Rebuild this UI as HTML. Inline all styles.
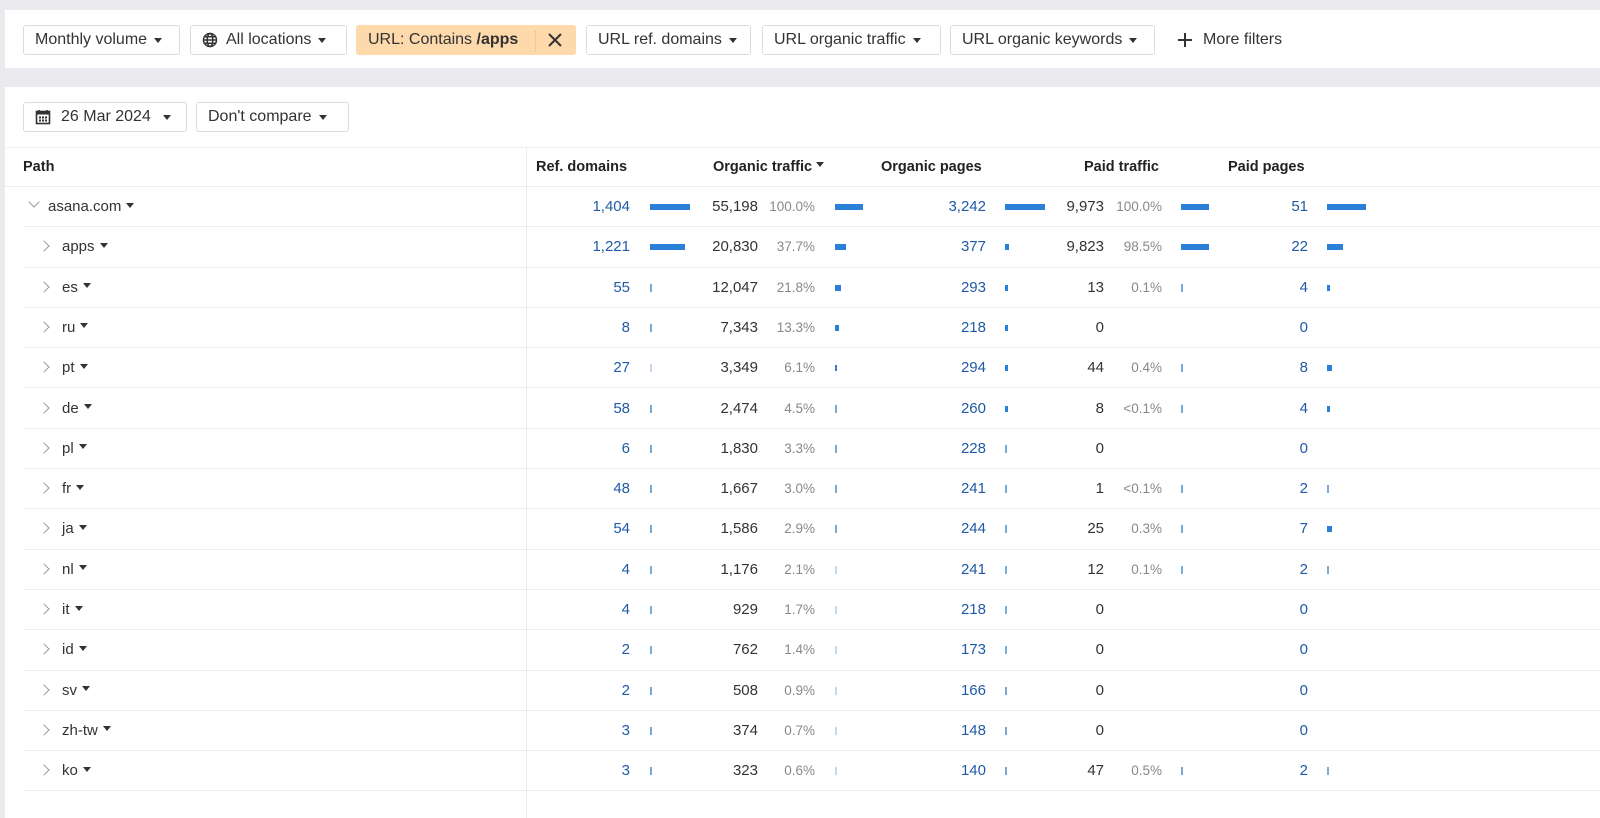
<!DOCTYPE html>
<html><head><meta charset="utf-8"><style>
*{box-sizing:border-box;margin:0;padding:0}
body{width:1600px;height:818px;background:#ebeaee;font-family:"Liberation Sans",Arial,sans-serif;font-size:15px;color:#333;position:relative;overflow:hidden}
.panel{position:absolute;left:5px;right:0;background:#fff}
.btn{position:absolute;height:30px;border:1px solid #dcdce0;border-radius:3px;background:#fff;display:flex;align-items:center;padding:0 11px;font-size:16px;color:#333;white-space:nowrap}
.car{display:inline-block;width:0;height:0;border-left:4px solid transparent;border-right:4px solid transparent;border-top:5px solid #333;margin-left:7px}
.row .car,.hdr .car{position:relative;top:-3px;margin-left:5px;vertical-align:middle}
.hdr{position:absolute;top:147px;left:5px;right:0;height:40px;border-top:1px solid #f0f0f2;border-bottom:1px solid #ececef;font-weight:bold;font-size:14.5px;color:#222}
.hdr span{position:absolute;top:11px}
.vline{position:absolute;left:526px;top:147px;bottom:0;width:1px;background:#ececef}
.row{position:absolute;left:23px;right:0;height:40.3px;border-bottom:1px solid #ececef}
.row span{position:absolute;top:11px;white-space:nowrap}
.row span .car{position:relative;top:-2px}
.r{text-align:right}
.b{color:#1f5aa6}
.g{color:#888;font-size:13.5px;top:12px!important}
.row i{position:absolute;top:17px;height:6px;background:#2a7fd8}
.row i.t{top:16px;height:8px;width:2px;background:#7aa9dc}
.chev{position:absolute;top:15px!important;width:8px;height:8px;border-right:1.3px solid #999;border-top:1.3px solid #999;transform:rotate(45deg)}
</style></head><body>
<div class="panel" style="top:10px;height:58px"></div>
<div class="btn" style="left:23px;top:25px;width:157px">Monthly volume<span class="car"></span></div>
<div class="btn" style="left:190px;top:25px;width:157px"><svg width="16" height="16" viewBox="0 0 16 16" style="margin-right:8px"><g fill="none" stroke="#333" stroke-width="1.5"><circle cx="8" cy="8" r="6.5"/><ellipse cx="8" cy="8" rx="2.8" ry="6.5"/><path d="M1.5 8h13M2.5 4.8h11M2.5 11.2h11"/></g></svg>All locations<span class="car"></span></div>
<div class="btn" style="left:356px;top:25px;width:220px;background:#fdd9ac;border-color:#fdd9ac">URL: Contains&nbsp;<b>/apps</b><span style="position:absolute;left:178px;top:5px;height:20px;border-left:1px dotted #e8b880"></span><svg width="14" height="14" viewBox="0 0 14 14" style="position:absolute;left:191px;top:7px"><path d="M1 1L13 13M13 1L1 13" stroke="#333" stroke-width="2"/></svg></div>
<div class="btn" style="left:586px;top:25px;width:165px">URL ref. domains<span class="car"></span></div>
<div class="btn" style="left:762px;top:25px;width:179px">URL organic traffic<span class="car"></span></div>
<div class="btn" style="left:950px;top:25px;width:205px">URL organic keywords<span class="car"></span></div>
<svg width="16" height="16" viewBox="0 0 16 16" style="position:absolute;left:1177px;top:32px"><path d="M8 1v14M1 8h14" stroke="#333" stroke-width="2"/></svg>
<div style="position:absolute;left:1203px;top:31px;font-size:16px">More filters</div>

<div class="panel" style="top:87px;bottom:0"></div>
<div class="btn" style="left:23px;top:102px;width:164px"><svg width="16" height="16" viewBox="0 0 16 16" style="margin-right:10px"><rect x="1.5" y="2.5" width="13" height="12" fill="none" stroke="#333" stroke-width="1.6"/><rect x="1.5" y="2.5" width="13" height="3" fill="#333"/><path d="M4 1v3M12 1v3" stroke="#333" stroke-width="1.6"/><g fill="#333"><rect x="4" y="7.5" width="2" height="2"/><rect x="7" y="7.5" width="2" height="2"/><rect x="10" y="7.5" width="2" height="2"/><rect x="4" y="10.5" width="2" height="2"/><rect x="7" y="10.5" width="2" height="2"/><rect x="10" y="10.5" width="2" height="2"/></g></svg>26 Mar 2024<span class="car" style="margin-left:12px"></span></div>
<div class="btn" style="left:196px;top:102px;width:153px">Don't compare<span class="car"></span></div>

<div class="hdr">
<span style="left:18px">Path</span>
<span style="left:531px">Ref. domains</span>
<span style="left:708px">Organic traffic<span class="car" style="margin-left:4px"></span></span>
<span style="left:876px">Organic pages</span>
<span style="left:1079px">Paid traffic</span>
<span style="left:1223px">Paid pages</span>
</div>
<div class="vline"></div>

<div class="row" style="top:187px"><span class="chev" style="left:7px;top:11px!important;transform:rotate(135deg)"></span><span style="left:25px">asana.com<span class="car"></span></span>
<span class="r b" style="left:507px;width:100px">1,404</span><i style="left:627px;width:40px"></i>
<span class="r" style="left:655px;width:80px">55,198</span><span class="r g" style="left:737px;width:55px">100.0%</span><i style="left:812px;width:28px"></i>
<span class="r b" style="left:863px;width:100px">3,242</span><i style="left:982px;width:40px"></i>
<span class="r" style="left:1001px;width:80px">9,973</span><span class="r g" style="left:1084px;width:55px">100.0%</span><i style="left:1158px;width:28px"></i>
<span class="r b" style="left:1205px;width:80px">51</span><i style="left:1304px;width:39px"></i></div>

<div class="row" style="top:227.3px"><span class="chev" style="left:17px"></span><span style="left:39px">apps<span class="car"></span></span>
<span class="r b" style="left:507px;width:100px">1,221</span><i style="left:627px;width:35px"></i>
<span class="r" style="left:655px;width:80px">20,830</span><span class="r g" style="left:737px;width:55px">37.7%</span><i style="left:812px;width:11px"></i>
<span class="r b" style="left:863px;width:100px">377</span><i style="left:982px;width:4px"></i>
<span class="r" style="left:1001px;width:80px">9,823</span><span class="r g" style="left:1084px;width:55px">98.5%</span><i style="left:1158px;width:28px"></i>
<span class="r b" style="left:1205px;width:80px">22</span><i style="left:1304px;width:16px"></i></div>

<div class="row" style="top:267.6px"><span class="chev" style="left:17px"></span><span style="left:39px">es<span class="car"></span></span>
<span class="r b" style="left:507px;width:100px">55</span><i class="t" style="left:627px"></i>
<span class="r" style="left:655px;width:80px">12,047</span><span class="r g" style="left:737px;width:55px">21.8%</span><i style="left:812px;width:6px"></i>
<span class="r b" style="left:863px;width:100px">293</span><i style="left:982px;width:3px"></i>
<span class="r" style="left:1001px;width:80px">13</span><span class="r g" style="left:1084px;width:55px">0.1%</span><i class="t" style="left:1158px"></i>
<span class="r b" style="left:1205px;width:80px">4</span><i style="left:1304px;width:3px"></i></div>

<div class="row" style="top:307.9px"><span class="chev" style="left:17px"></span><span style="left:39px">ru<span class="car"></span></span>
<span class="r b" style="left:507px;width:100px">8</span><i class="t" style="left:627px"></i>
<span class="r" style="left:655px;width:80px">7,343</span><span class="r g" style="left:737px;width:55px">13.3%</span><i style="left:812px;width:4px"></i>
<span class="r b" style="left:863px;width:100px">218</span><i style="left:982px;width:3px"></i>
<span class="r" style="left:1001px;width:80px">0</span>
<span class="r b" style="left:1205px;width:80px">0</span></div>

<div class="row" style="top:348.2px"><span class="chev" style="left:17px"></span><span style="left:39px">pt<span class="car"></span></span>
<span class="r b" style="left:507px;width:100px">27</span><i class="t" style="left:627px;background:#c5d8ee"></i>
<span class="r" style="left:655px;width:80px">3,349</span><span class="r g" style="left:737px;width:55px">6.1%</span><i style="left:812px;width:2px"></i>
<span class="r b" style="left:863px;width:100px">294</span><i style="left:982px;width:3px"></i>
<span class="r" style="left:1001px;width:80px">44</span><span class="r g" style="left:1084px;width:55px">0.4%</span><i class="t" style="left:1158px"></i>
<span class="r b" style="left:1205px;width:80px">8</span><i style="left:1304px;width:5px"></i></div>

<div class="row" style="top:388.5px"><span class="chev" style="left:17px"></span><span style="left:39px">de<span class="car"></span></span>
<span class="r b" style="left:507px;width:100px">58</span><i class="t" style="left:627px"></i>
<span class="r" style="left:655px;width:80px">2,474</span><span class="r g" style="left:737px;width:55px">4.5%</span><i class="t" style="left:812px"></i>
<span class="r b" style="left:863px;width:100px">260</span><i style="left:982px;width:3px"></i>
<span class="r" style="left:1001px;width:80px">8</span><span class="r g" style="left:1084px;width:55px">&lt;0.1%</span><i class="t" style="left:1158px"></i>
<span class="r b" style="left:1205px;width:80px">4</span><i style="left:1304px;width:3px"></i></div>

<div class="row" style="top:428.8px"><span class="chev" style="left:17px"></span><span style="left:39px">pl<span class="car"></span></span>
<span class="r b" style="left:507px;width:100px">6</span><i class="t" style="left:627px"></i>
<span class="r" style="left:655px;width:80px">1,830</span><span class="r g" style="left:737px;width:55px">3.3%</span><i class="t" style="left:812px"></i>
<span class="r b" style="left:863px;width:100px">228</span><i class="t" style="left:982px"></i>
<span class="r" style="left:1001px;width:80px">0</span>
<span class="r b" style="left:1205px;width:80px">0</span></div>

<div class="row" style="top:469.1px"><span class="chev" style="left:17px"></span><span style="left:39px">fr<span class="car"></span></span>
<span class="r b" style="left:507px;width:100px">48</span><i class="t" style="left:627px"></i>
<span class="r" style="left:655px;width:80px">1,667</span><span class="r g" style="left:737px;width:55px">3.0%</span><i class="t" style="left:812px"></i>
<span class="r b" style="left:863px;width:100px">241</span><i class="t" style="left:982px"></i>
<span class="r" style="left:1001px;width:80px">1</span><span class="r g" style="left:1084px;width:55px">&lt;0.1%</span><i class="t" style="left:1158px"></i>
<span class="r b" style="left:1205px;width:80px">2</span><i class="t" style="left:1304px"></i></div>

<div class="row" style="top:509.4px"><span class="chev" style="left:17px"></span><span style="left:39px">ja<span class="car"></span></span>
<span class="r b" style="left:507px;width:100px">54</span><i class="t" style="left:627px"></i>
<span class="r" style="left:655px;width:80px">1,586</span><span class="r g" style="left:737px;width:55px">2.9%</span><i class="t" style="left:812px"></i>
<span class="r b" style="left:863px;width:100px">244</span><i class="t" style="left:982px"></i>
<span class="r" style="left:1001px;width:80px">25</span><span class="r g" style="left:1084px;width:55px">0.3%</span><i class="t" style="left:1158px"></i>
<span class="r b" style="left:1205px;width:80px">7</span><i style="left:1304px;width:5px"></i></div>

<div class="row" style="top:549.7px"><span class="chev" style="left:17px"></span><span style="left:39px">nl<span class="car"></span></span>
<span class="r b" style="left:507px;width:100px">4</span><i class="t" style="left:627px"></i>
<span class="r" style="left:655px;width:80px">1,176</span><span class="r g" style="left:737px;width:55px">2.1%</span><i class="t" style="left:812px;background:#c5d8ee"></i>
<span class="r b" style="left:863px;width:100px">241</span><i class="t" style="left:982px"></i>
<span class="r" style="left:1001px;width:80px">12</span><span class="r g" style="left:1084px;width:55px">0.1%</span><i class="t" style="left:1158px"></i>
<span class="r b" style="left:1205px;width:80px">2</span><i class="t" style="left:1304px"></i></div>

<div class="row" style="top:590px"><span class="chev" style="left:17px"></span><span style="left:39px">it<span class="car"></span></span>
<span class="r b" style="left:507px;width:100px">4</span><i class="t" style="left:627px"></i>
<span class="r" style="left:655px;width:80px">929</span><span class="r g" style="left:737px;width:55px">1.7%</span><i class="t" style="left:812px;background:#c5d8ee"></i>
<span class="r b" style="left:863px;width:100px">218</span><i class="t" style="left:982px"></i>
<span class="r" style="left:1001px;width:80px">0</span>
<span class="r b" style="left:1205px;width:80px">0</span></div>

<div class="row" style="top:630.3px"><span class="chev" style="left:17px"></span><span style="left:39px">id<span class="car"></span></span>
<span class="r b" style="left:507px;width:100px">2</span><i class="t" style="left:627px"></i>
<span class="r" style="left:655px;width:80px">762</span><span class="r g" style="left:737px;width:55px">1.4%</span><i class="t" style="left:812px;background:#c5d8ee"></i>
<span class="r b" style="left:863px;width:100px">173</span><i class="t" style="left:982px"></i>
<span class="r" style="left:1001px;width:80px">0</span>
<span class="r b" style="left:1205px;width:80px">0</span></div>

<div class="row" style="top:670.6px"><span class="chev" style="left:17px"></span><span style="left:39px">sv<span class="car"></span></span>
<span class="r b" style="left:507px;width:100px">2</span><i class="t" style="left:627px"></i>
<span class="r" style="left:655px;width:80px">508</span><span class="r g" style="left:737px;width:55px">0.9%</span><i class="t" style="left:812px;background:#c5d8ee"></i>
<span class="r b" style="left:863px;width:100px">166</span><i class="t" style="left:982px"></i>
<span class="r" style="left:1001px;width:80px">0</span>
<span class="r b" style="left:1205px;width:80px">0</span></div>

<div class="row" style="top:710.9px"><span class="chev" style="left:17px"></span><span style="left:39px">zh-tw<span class="car"></span></span>
<span class="r b" style="left:507px;width:100px">3</span><i class="t" style="left:627px"></i>
<span class="r" style="left:655px;width:80px">374</span><span class="r g" style="left:737px;width:55px">0.7%</span><i class="t" style="left:812px;background:#c5d8ee"></i>
<span class="r b" style="left:863px;width:100px">148</span><i class="t" style="left:982px"></i>
<span class="r" style="left:1001px;width:80px">0</span>
<span class="r b" style="left:1205px;width:80px">0</span></div>

<div class="row" style="top:751.2px"><span class="chev" style="left:17px"></span><span style="left:39px">ko<span class="car"></span></span>
<span class="r b" style="left:507px;width:100px">3</span><i class="t" style="left:627px"></i>
<span class="r" style="left:655px;width:80px">323</span><span class="r g" style="left:737px;width:55px">0.6%</span><i class="t" style="left:812px;background:#c5d8ee"></i>
<span class="r b" style="left:863px;width:100px">140</span><i class="t" style="left:982px"></i>
<span class="r" style="left:1001px;width:80px">47</span><span class="r g" style="left:1084px;width:55px">0.5%</span><i class="t" style="left:1158px"></i>
<span class="r b" style="left:1205px;width:80px">2</span><i class="t" style="left:1304px"></i></div>
</body></html>
